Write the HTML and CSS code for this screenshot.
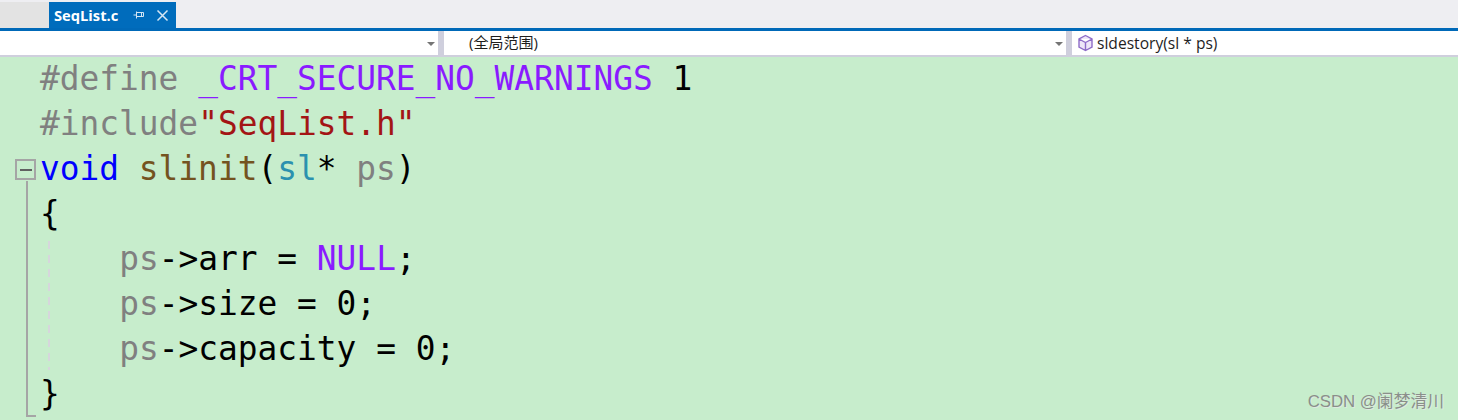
FILE: index.html
```html
<!DOCTYPE html>
<html lang="zh">
<head>
<meta charset="utf-8">
<title>SeqList.c</title>
<link rel="stylesheet" href="styles.css">
</head>
<body>
<div class="tabstrip">
  <div class="tab-blank"></div>
  <div class="tab">
    <span class="tab-name">SeqList.c</span>
    <svg class="pin" width="12" height="12" viewBox="0 0 12 12"><path d="M0.5 6H3.5M3.5 2.5V9.5M3.5 3.5H10.5V7.5H3.5M8.5 3.5V7.5" fill="none" stroke="#d3e5f4" stroke-width="1"/></svg>
    <svg class="close" width="13" height="13" viewBox="0 0 13 13"><path d="M1.5 1.5L11.5 11.5M11.5 1.5L1.5 11.5" fill="none" stroke="#d5e6f4" stroke-width="1.5"/></svg>
  </div>
</div>
<div class="navbar">
  <div class="nav-cell nav-project"><span class="arrow"></span></div>
  <div class="nav-cell nav-scope"><span class="nav-text scope-text">(全局范围)</span><span class="arrow"></span></div>
  <div class="nav-cell nav-member">
    <svg class="cube" width="17" height="18" viewBox="0 0 17 18"><path d="M8.5 1.5L15 5V13L8.5 16.5L2 13V5ZM2 5L8.5 8.5L15 5M8.5 8.5V16.5" fill="#eee6f8" stroke="#8e6cc8" stroke-width="1.4"/></svg>
    <span class="nav-text">sldestory(sl * ps)</span>
  </div>
</div>
<main class="editor">
  <span class="fold-box"><span class="fold-minus"></span></span>
  <span class="fold-line"></span>
  <span class="indent-guide"></span>
  <div class="code">
    <div class="line"><span class="pp">#define </span><span class="macro">_CRT_SECURE_NO_WARNINGS </span><span>1</span></div>
    <div class="line"><span class="pp">#include</span><span class="str">"SeqList.h"</span></div>
    <div class="line"><span class="kw">void </span><span class="fn">slinit</span><span>(</span><span class="type">sl</span><span>* </span><span class="param">ps</span><span>)</span></div>
    <div class="line"><span>{</span></div>
    <div class="line indented"><span class="param">ps</span><span>-&gt;arr = </span><span class="macro">NULL</span><span>;</span></div>
    <div class="line indented"><span class="param">ps</span><span>-&gt;size = 0;</span></div>
    <div class="line indented"><span class="param">ps</span><span>-&gt;capacity = 0;</span></div>
    <div class="line"><span>}</span></div>
  </div>
  <div class="watermark">CSDN @阑梦清川</div>
</main>
</body>
</html>
```
FILE: styles.css
```css
* { box-sizing: border-box; }
html, body { margin: 0; height: 100%; overflow: hidden; }
body { width: 1458px; height: 420px; display: flex; flex-direction: column; font-family: "Open Sans", "Noto Sans CJK SC", sans-serif; }
.tabstrip { height: 31px; background: #eeeef2; border-bottom: 3px solid #0069b8; display: flex; align-items: flex-end; padding-top: 2px; }
.tab-blank { width: 49px; height: 26px; background: #e3e3e3; }
.tab { width: 127px; height: 26px; background: #006cbc; display: flex; align-items: center; padding-left: 5px; color: #fff; }
.tab-name { font-family: "Open Sans", sans-serif; font-size: 14.7px; font-weight: 700; width: 79px; }
.pin { margin-left: 0; }
.close { margin-left: 11px; }
.navbar { height: 26px; background: #cfcfdd; display: flex; padding-bottom: 2px; }
.nav-cell { background: #fff; height: 24px; display: flex; align-items: center; color: #1e1e1e; }
.nav-project { width: 438px; margin-right: 6px; justify-content: flex-end; padding-right: 3px; }
.nav-scope { width: 622px; margin-right: 6px; justify-content: space-between; padding: 0 3px 0 25px; }
.nav-member { flex: 1; padding-left: 5px; gap: 3px; }
.nav-text { font-size: 15.6px; }
.scope-text { font-size: 15px; line-height: 20px; padding-bottom: 2px; }
.arrow { width: 0; height: 0; border-left: 4px solid transparent; border-right: 4px solid transparent; border-top: 4px solid #757575; margin-top: 2px; }
.editor { flex: 1; background: #c7edcc; position: relative; padding: 0 0 0 40px; overflow: hidden; }
.code { font-family: "DejaVu Sans Mono", monospace; font-size: 32.85px; line-height: 45px; color: #000; }
.line { height: 45px; white-space: pre; }
.indented { padding-left: 79.2px; }
.pp { color: #808080; }
.macro { color: #8a1bff; }
.str { color: #a31515; }
.kw { color: #0000ff; }
.fn { color: #74531f; }
.type { color: #2b91af; }
.param { color: #808080; }
.fold-box { position: absolute; left: 15px; top: 102px; width: 21px; height: 21px; border: 2px solid #a5a5a5; display: flex; align-items: center; justify-content: center; }
.fold-minus { width: 12px; height: 2px; background: #606060; }
.fold-line { position: absolute; left: 26px; top: 124px; width: 10px; height: 236px; border-left: 2px solid #a5a5a5; border-bottom: 2px solid #a5a5a5; }
.indent-guide { position: absolute; left: 48px; top: 184px; width: 2px; height: 129px; background: repeating-linear-gradient(to bottom, #d6d6dc 0 8px, transparent 8px 14px); }
.watermark { position: absolute; right: 14px; bottom: 7px; font-family: "Liberation Sans", "Noto Sans CJK SC", sans-serif; font-size: 16.8px; line-height: 22px; color: #8a8f8a; text-shadow: 1px 1px 0 #dfe9df; }
```
